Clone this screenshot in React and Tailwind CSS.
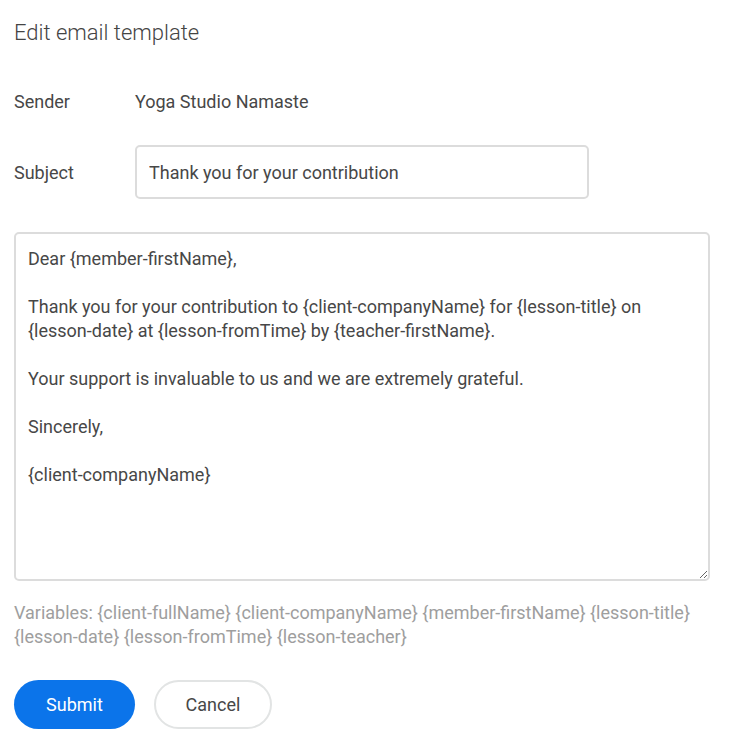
const body = `Dear {member-firstName},

Thank you for your contribution to {client-companyName} for {lesson-title} on {lesson-date} at {lesson-fromTime} by {teacher-firstName}.

Your support is invaluable to us and we are extremely grateful.

Sincerely,

{client-companyName}`;

const EditEmailTemplate = () => {
  return (
    <div className="min-h-screen bg-white px-[14px] pt-[19px] font-['Roboto',sans-serif] text-[#474747]">
      {/* Title */}
      <h1 className="text-[22px] leading-[28px] font-light text-[#444]">Edit email template</h1>

      {/* Sender */}
      <div className="mt-[43px] flex items-center text-[18px] leading-6">
        <span className="w-[121px]">Sender</span>
        <span>Yoga Studio Namaste</span>
      </div>

      {/* Subject */}
      <div className="mt-[31px] flex items-center text-[18px] leading-6">
        <label className="w-[121px] pt-px">Subject</label>
        <input
          defaultValue="Thank you for your contribution"
          className="h-[54px] w-[454px] rounded-[5px] border-2 border-[#dcdcdc] px-[12px] text-[18px] text-[#474747] outline-none"
        />
      </div>

      {/* Body */}
      <textarea
        defaultValue={body}
        className="mt-[33px] block h-[349px] w-[696px] rounded-[5px] border-2 border-[#dcdcdc] px-[12px] py-[13px] text-[18px] leading-6 text-[#474747] outline-none"
      />

      {/* Variables hint */}
      <p className="mt-[20px] text-[18px] leading-6 text-[#9e9e9e]">
        Variables: {'{client-fullName}'} {'{client-companyName}'} {'{member-firstName}'} {'{lesson-title}'} {'{lesson-date}'} {'{lesson-fromTime}'} {'{lesson-teacher}'}
      </p>

      {/* Actions */}
      <div className="mt-[31px] flex gap-[19px]">
        <button className="h-[49px] w-[121px] rounded-full bg-[#0b74ea] text-[18px] text-white">Submit</button>
        <button className="h-[49px] w-[118px] rounded-full border-2 border-[#e2e4e4] bg-white text-[18px] text-[#474747]">Cancel</button>
      </div>
    </div>
  );
};

export default EditEmailTemplate;
